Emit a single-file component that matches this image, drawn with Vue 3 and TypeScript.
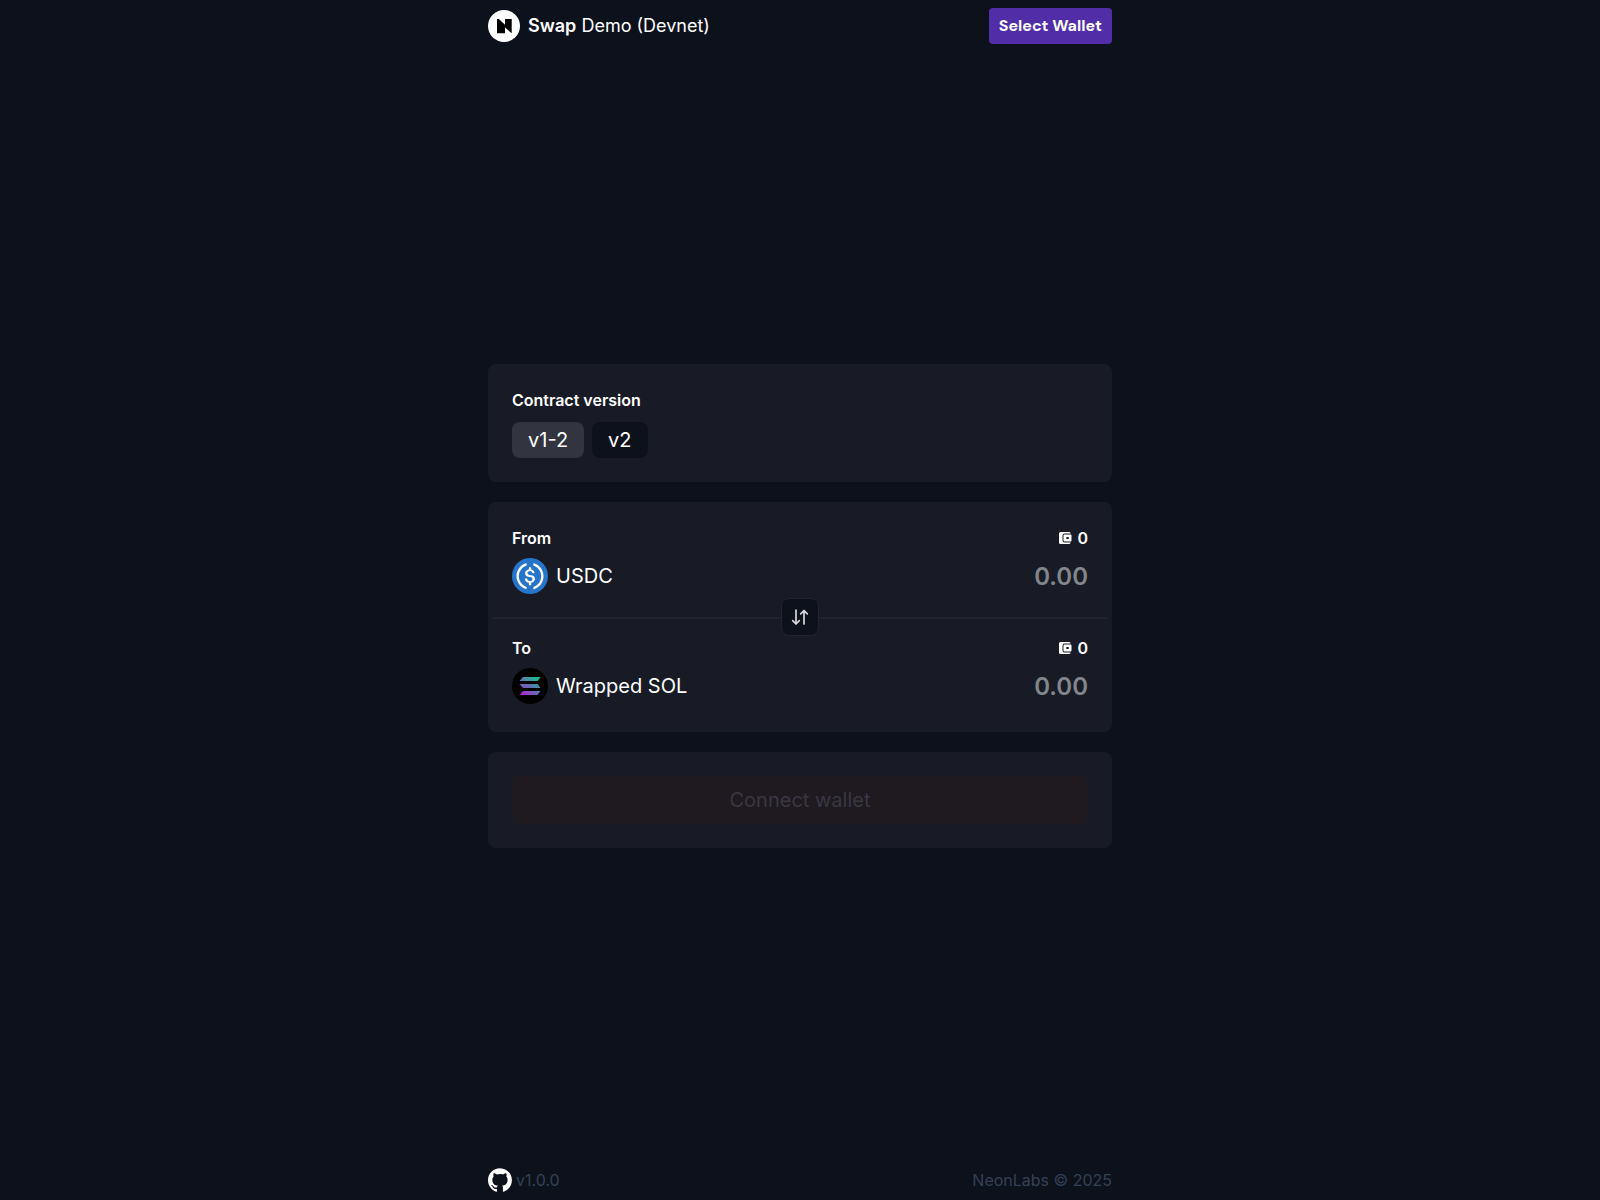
<script setup lang="ts">
import { ref } from 'vue'

interface Token {
  id: string
  label: string
  name: string
  icon: 'usdc' | 'sol'
  balance: number
}

const versions: string[] = ['v1-2', 'v2']
const version = ref<string>('v1-2')
const tokens = ref<Token[]>([
  { id: 'from', label: 'From', name: 'USDC', icon: 'usdc', balance: 0 },
  { id: 'to', label: 'To', name: 'Wrapped SOL', icon: 'sol', balance: 0 },
])
const amounts = ref<string[]>(['', ''])

function swap(): void {
  const [a, b] = tokens.value
  tokens.value = [
    { ...b, id: 'from', label: 'From' },
    { ...a, id: 'to', label: 'To' },
  ]
  amounts.value.reverse()
}
</script>

<template>
  <div class="app">
    <header class="header">
      <a class="brand" href="#">
        <svg class="logo" viewBox="0 0 32 32" aria-hidden="true">
          <circle cx="16" cy="16" r="16" fill="#fff" />
          <path d="M9 9h1.800L17 14.800V9h6.700v14.300L17 17.600v5.700H9z" fill="#000" />
        </svg>
        <span><b>Swap</b> Demo (Devnet)</span>
      </a>
      <button class="select-wallet" type="button">Select Wallet</button>
    </header>

    <main class="main">
      <section class="card">
        <h2 class="label">Contract version</h2>
        <div class="versions">
          <button
            v-for="v in versions"
            :key="v"
            type="button"
            class="version"
            :class="{ active: v === version }"
            :aria-pressed="v === version"
            @click="version = v"
          >{{ v }}</button>
        </div>
      </section>

      <section class="card swap">
        <template v-for="(token, i) in tokens" :key="token.id">
          <div v-if="i === 1" class="divider">
            <button class="switch" type="button" aria-label="Switch tokens" @click="swap">
              <svg viewBox="0 0 18 18" aria-hidden="true">
                <path d="M5 2v14M1.700 12.700L5 16l3.300-3.300M13 16V2.500M9.700 5.800L13 2.500l3.300 3.300" />
              </svg>
            </button>
          </div>
          <div class="field">
            <div class="row top">
              <label class="label" :for="token.id">{{ token.label }}</label>
              <span class="balance">
                <svg viewBox="0 0 14 14" aria-hidden="true">
                  <path d="M2.500 1h8.700A1.600 1.600 0 0 1 12.700 2.500H6.500A2 2 0 0 0 4.500 4.500v5a2 2 0 0 0 2 2h6.200A1.600 1.600 0 0 1 11.200 13H2.500A1.500 1.500 0 0 1 1 11.500V2.500A1.500 1.500 0 0 1 2.500 1z" />
                  <path fill-rule="evenodd" d="M6.500 3.500h6a1 1 0 0 1 1 1v5a1 1 0 0 1-1 1h-6a1 1 0 0 1-1-1v-5a1 1 0 0 1 1-1zM8.300 5.900v2.200h2.400V5.900z" />
                </svg>
                {{ token.balance }}
              </span>
            </div>
            <div class="row">
              <button class="token" type="button">
                <svg v-if="token.icon === 'usdc'" viewBox="0 0 2000 2000" aria-hidden="true">
                  <circle cx="1000" cy="1000" r="1000" fill="#2775ca" />
                  <path d="M1275 1158.330c0-145.830-87.500-195.830-262.500-216.660-125-16.670-150-50-150-108.340s41.670-95.830 125-95.830c75 0 116.670 25 137.500 87.500 4.170 12.500 16.670 20.830 29.170 20.830h66.660c16.670 0 29.170-12.500 29.170-29.160v-4.170c-16.670-91.670-91.670-162.500-187.500-170.830v-100c0-16.670-12.500-29.170-33.330-33.340h-62.500c-16.670 0-29.170 12.500-33.340 33.340v95.830c-125 16.670-204.160 100-204.160 204.170 0 137.500 83.330 191.660 258.330 212.500 116.670 20.830 154.170 45.830 154.170 112.500s-58.340 112.500-137.500 112.500c-108.340 0-145.840-45.840-158.340-108.340-4.160-16.660-16.660-25-29.160-25h-70.840c-16.660 0-29.160 12.500-29.160 29.170v4.170c16.660 104.160 83.330 179.160 220.830 200v100c0 16.660 12.500 29.160 33.330 33.330h62.500c16.670 0 29.170-12.500 33.340-33.330v-100c125-20.840 208.330-108.340 208.330-220.840z" fill="#fff" />
                  <path d="M787.500 1595.830c-325-116.660-491.670-479.160-370.830-800 62.500-175 200-308.330 370.830-370.830 16.670-8.330 25-20.830 25-41.670V325c0-16.670-8.330-29.170-25-33.330-4.170 0-12.500 0-16.670 4.160-395.830 125-612.500 545.840-487.500 941.670 75 233.330 254.170 412.500 487.500 487.500 16.670 8.330 33.340 0 37.500-16.670 4.170-4.160 4.170-8.330 4.170-16.660v-58.340c0-12.500-12.500-29.160-25-37.500zM1229.170 295.830c-16.670-8.330-33.340 0-37.500 16.670-4.170 4.170-4.170 8.330-4.170 16.670v58.330c0 16.670 12.500 33.330 25 41.670 325 116.660 491.670 479.160 370.830 800-62.500 175-200 308.330-370.830 370.830-16.670 8.330-25 20.830-25 41.670V1700c0 16.670 8.330 29.170 25 33.330 4.170 0 12.500 0 16.670-4.160 395.830-125 612.500-545.840 487.500-941.670-75-237.500-258.340-416.670-487.500-491.670z" fill="#fff" />
                </svg>
                <svg v-else viewBox="0 0 36 36" aria-hidden="true">
                  <defs>
                    <linearGradient id="sol-fill" gradientUnits="userSpaceOnUse" x1="11" y1="28" x2="25" y2="8">
                      <stop offset="0" stop-color="#b51fd6" />
                      <stop offset=".5" stop-color="#5f74b0" />
                      <stop offset="1" stop-color="#10c68a" />
                    </linearGradient>
                  </defs>
                  <circle cx="18" cy="18" r="18" fill="#000" />
                  <path d="M11 9h17.500L25.500 13H7.500zM7.500 16H25.500l3 4H11zM11 23h17.500L25.500 27H7.500z" fill="url(#sol-fill)" />
                </svg>
                {{ token.name }}
              </button>
              <input :id="token.id" v-model="amounts[i]" class="amount" type="text" inputmode="decimal" placeholder="0.00" />
            </div>
          </div>
        </template>
      </section>

      <section class="card">
        <button class="connect" type="button" disabled>Connect wallet</button>
      </section>
    </main>

    <footer class="footer">
      <a class="repo" href="#">
        <svg viewBox="0 0 98 96" aria-hidden="true">
          <path fill="#fff" fill-rule="evenodd" d="M48.854 0C21.839 0 0 22 0 49.217c0 21.756 13.993 40.172 33.405 46.690 2.427.490 3.316-1.059 3.316-2.362 0-1.141-.080-5.052-.080-9.127-13.590 2.934-16.420-5.867-16.420-5.867-2.184-5.704-5.420-7.170-5.420-7.170-4.448-3.015.324-3.015.324-3.015 4.934.326 7.523 5.052 7.523 5.052 4.367 7.496 11.404 5.378 14.235 4.074.404-3.178 1.699-5.378 3.074-6.600-10.839-1.141-22.243-5.378-22.243-24.283 0-5.378 1.940-9.778 5.014-13.200-.485-1.222-2.184-6.275.486-13.038 0 0 4.125-1.304 13.426 5.052a46.970 46.970 0 0 1 12.214-1.630c4.125 0 8.330.571 12.213 1.630 9.302-6.356 13.427-5.052 13.427-5.052 2.670 6.763.970 11.816.485 13.038 3.155 3.422 5.015 7.822 5.015 13.200 0 18.905-11.404 23.060-22.324 24.283 1.780 1.548 3.316 4.481 3.316 9.126 0 6.600-.080 11.897-.080 13.526 0 1.304.890 2.853 3.316 2.364 19.412-6.520 33.405-24.935 33.405-46.691C97.707 22 75.788 0 48.854 0z" />
        </svg>
        v1.0.0
      </a>
      <span>NeonLabs © 2025</span>
    </footer>
  </div>
</template>

<style>
body {
  margin: 0;
  background: #0d111c;
}
</style>

<style scoped>
.app {
  display: flex;
  flex-direction: column;
  box-sizing: border-box;
  min-height: 100vh;
  max-width: 624px;
  margin: 0 auto;
  color: #fff;
  font: 400 16px/24px Inter, "Liberation Sans", sans-serif;
}

button,
input {
  margin: 0;
  padding: 0;
  border: 0;
  background: none;
  color: inherit;
  font: inherit;
}

button:enabled {
  cursor: pointer;
}

svg {
  display: block;
  flex: none;
}

.header,
.footer,
.row {
  display: flex;
  align-items: center;
  justify-content: space-between;
}

.header {
  height: 52px;
}

.brand {
  display: flex;
  align-items: center;
  gap: 8px;
  color: #fff;
  font-size: 18px;
  text-decoration: none;
}

.brand b {
  font-weight: 600;
}

.logo {
  width: 32px;
  height: 32px;
}

.select-wallet {
  height: 36px;
  padding: 0 10px;
  border-radius: 4px;
  background: #512da8;
  font-family: "DM Sans", Inter, sans-serif;
  font-weight: 700;
}

.main {
  display: flex;
  flex: 1;
  flex-direction: column;
  justify-content: center;
  gap: 20px;
}

.card {
  padding: 24px;
  border-radius: 8px;
  background: #181b25;
}

.label {
  margin: 0;
  font-size: 16px;
  font-weight: 600;
  line-height: 24px;
}

.versions {
  display: flex;
  gap: 8px;
  margin-top: 10px;
}

.version {
  height: 36px;
  padding: 0 16px;
  border-radius: 8px;
  background: #0d111c;
  font-size: 20px;
}

.version.active {
  background: #32353f;
}

.swap {
  padding: 0 4px 4px;
}

.field {
  padding: 24px 20px;
}

.divider + .field {
  padding-top: 17px;
}

.row.top {
  margin-bottom: 8px;
}

.balance {
  display: flex;
  align-items: center;
  gap: 5px;
  font-weight: 600;
}

.balance svg {
  width: 14px;
  height: 14px;
  fill: #fff;
}

.token {
  display: flex;
  align-items: center;
  gap: 8px;
  font-size: 20px;
}

.token svg {
  width: 36px;
  height: 36px;
}

.amount {
  width: 50%;
  height: 36px;
  outline: 0;
  font-size: 24px;
  font-weight: 600;
  text-align: right;
}

.amount::placeholder {
  color: #82858c;
  opacity: 1;
}

.divider {
  display: flex;
  align-items: center;
  justify-content: center;
  height: 0;
  margin-top: -1px;
  border-bottom: 2px solid #20242e;
}

.switch {
  display: flex;
  flex: none;
  align-items: center;
  justify-content: center;
  box-sizing: border-box;
  width: 38px;
  height: 38px;
  border: 1px solid #20242e;
  border-radius: 8px;
  background: #0d111c;
}

.switch svg {
  width: 18px;
  height: 18px;
  fill: none;
  stroke: #d9d9d9;
  stroke-width: 1.7;
  stroke-linecap: round;
  stroke-linejoin: round;
}

.connect {
  display: block;
  width: 100%;
  height: 48px;
  border-radius: 8px;
  background: #1e1a20;
  color: #3a3742;
  font-size: 20px;
}

.footer {
  height: 40px;
  color: #334155;
}

.repo {
  display: flex;
  align-items: center;
  gap: 4px;
  color: inherit;
  text-decoration: none;
}

.repo svg {
  width: 24px;
  height: 24px;
}
</style>
